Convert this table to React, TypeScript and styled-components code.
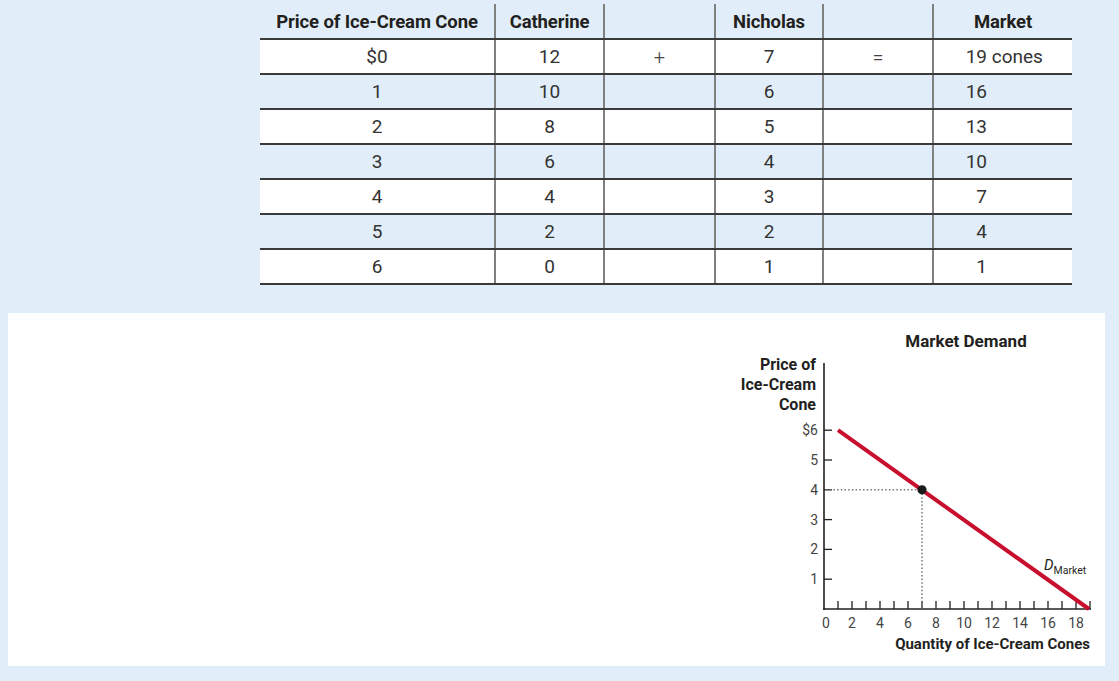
import React from "react";
import styled, { createGlobalStyle } from "styled-components";

const Global = createGlobalStyle`
  html, body { margin: 0; padding: 0; background: #e1eef9; }
  body { font-family: Roboto, "Liberation Sans", sans-serif; color: #222; }
`;

const Page = styled.div`
  width: 1119px;
  height: 681px;
  padding-top: 4px;
  box-sizing: border-box;
  display: flex;
  flex-direction: column;
`;

const TableWrap = styled.div`
  margin-left: 260px;
`;

const Table = styled.table`
  border-collapse: collapse;
  table-layout: fixed;
  width: 812px;
`;

const HeadCell = styled.th<{ $w: number }>`
  width: ${(p) => p.$w}px;
  height: 32px;
  padding: 2px 0 0;
  font-size: 18.5px;
  font-weight: 700;
  letter-spacing: -0.1px;
  color: #231f20;
  text-align: center;
  vertical-align: middle;
  border-bottom: 2px solid #3a3a3a;
  border-left: 2px solid #808080;
  &:first-child { border-left: none; }
`;

const Row = styled.tr<{ $alt: boolean }>`
  background: ${(p) => (p.$alt ? "#e1eef9" : "#ffffff")};
`;

const Cell = styled.td`
  height: 33px;
  padding: 0;
  font-size: 19px;
  font-weight: 400;
  color: #333;
  text-align: center;
  vertical-align: middle;
  border-bottom: 2px solid #3a3a3a;
  border-left: 2px solid #808080;
  &:first-child { border-left: none; }
`;

const MarketCell = styled(Cell)`
  text-align: left;
  padding-left: 28px;
`;

const Num = styled.span`
  display: inline-block;
  width: 25px;
  text-align: right;
`;

const Sign = styled.span`
  font-size: 20px;
  font-weight: 300;
  color: #444;
`;

const Panel = styled.div`
  margin-top: 28px;
  margin-left: 8px;
  width: 1097px;
  height: 353px;
  background: #ffffff;
  display: flex;
  justify-content: flex-end;
`;

const ChartSvg = styled.svg`
  display: block;
  font-family: Roboto, "Liberation Sans", sans-serif;
`;

const rows = [
  ["$0", "12", "+", "7", "=", "19", " cones"],
  ["1", "10", "", "6", "", "16", ""],
  ["2", "8", "", "5", "", "13", ""],
  ["3", "6", "", "4", "", "10", ""],
  ["4", "4", "", "3", "", "7", ""],
  ["5", "2", "", "2", "", "4", ""],
  ["6", "0", "", "1", "", "1", ""],
];

const widths = [234, 107, 109, 106, 108, 138];
const heads = ["Price of Ice-Cream Cone", "Catherine", "", "Nicholas", "", "Market"];

const X0 = 99;
const Y0 = 296;
const qx = (q: number) => X0 + 14 * q;
const py = (p: number) => Y0 - 29.8 * p;

function Chart() {
  const yTicks = [1, 2, 3, 4, 5, 6];
  const xTicks = Array.from({ length: 19 }, (_, i) => i + 1);
  const xLabels = [0, 2, 4, 6, 8, 10, 12, 14, 16, 18];
  return (
    <ChartSvg width={380} height={353} viewBox="0 0 380 353">
      <text x={241} y={34} textAnchor="middle" fontSize={17} fontWeight={700} fill="#231f20">
        Market Demand
      </text>
      <g fontSize={16} fontWeight={700} fill="#231f20" textAnchor="end">
        <text x={91} y={57}>Price of</text>
        <text x={91} y={77}>Ice-Cream</text>
        <text x={91} y={97}>Cone</text>
      </g>
      <line x1={X0} y1={50} x2={X0} y2={Y0 + 1} stroke="#231f20" strokeWidth={1.6} />
      <line x1={X0 - 0.8} y1={Y0} x2={366} y2={Y0} stroke="#231f20" strokeWidth={1.6} />
      {yTicks.map((p) => (
        <g key={p}>
          <line x1={X0} y1={py(p)} x2={X0 + 8} y2={py(p)} stroke="#231f20" strokeWidth={1.3} />
          <text x={93} y={py(p) + 5} textAnchor="end" fontSize={14} fill="#444">
            {p === 6 ? "$6" : p}
          </text>
        </g>
      ))}
      {xTicks.map((q) => (
        <line key={q} x1={qx(q)} y1={Y0} x2={qx(q)} y2={Y0 - 8} stroke="#231f20" strokeWidth={1.3} />
      ))}
      {xLabels.map((q) => (
        <text key={q} x={qx(q) + (q === 0 ? 2 : 0)} y={315} textAnchor="middle" fontSize={14} fill="#444">
          {q}
        </text>
      ))}
      <line x1={X0 + 2} y1={py(4)} x2={qx(7)} y2={py(4)} stroke="#777" strokeWidth={1.5} strokeDasharray="1.5 2.2" />
      <line x1={qx(7)} y1={py(4)} x2={qx(7)} y2={Y0} stroke="#777" strokeWidth={1.5} strokeDasharray="1.5 2.2" />
      <line x1={qx(1)} y1={py(6)} x2={qx(19) - 1} y2={Y0} stroke="#c8102e" strokeWidth={4} />
      <circle cx={qx(7)} cy={py(4)} r={4.6} fill="#1a1a1a" />
      <text x={319} y={257} fontSize={15} fontStyle="italic" fill="#231f20">
        D
        <tspan fontSize={10.5} fontStyle="normal" dy={4}>Market</tspan>
      </text>
      <text x={365} y={336} textAnchor="end" fontSize={15} fontWeight={700} fill="#231f20">
        Quantity of Ice-Cream Cones
      </text>
    </ChartSvg>
  );
}

export default function App() {
  return (
    <>
      <Global />
      <Page>
        <TableWrap>
          <Table>
            <thead>
              <tr>
                {heads.map((h, i) => (
                  <HeadCell key={i} $w={widths[i]}>{h}</HeadCell>
                ))}
              </tr>
            </thead>
            <tbody>
              {rows.map((r, i) => (
                <Row key={i} $alt={i % 2 === 1}>
                  <Cell>{r[0]}</Cell>
                  <Cell>{r[1]}</Cell>
                  <Cell><Sign>{r[2]}</Sign></Cell>
                  <Cell>{r[3]}</Cell>
                  <Cell><Sign>{r[4]}</Sign></Cell>
                  <MarketCell>
                    <Num>{r[5]}</Num>
                    {r[6]}
                  </MarketCell>
                </Row>
              ))}
            </tbody>
          </Table>
        </TableWrap>
        <Panel>
          <Chart />
        </Panel>
      </Page>
    </>
  );
}
